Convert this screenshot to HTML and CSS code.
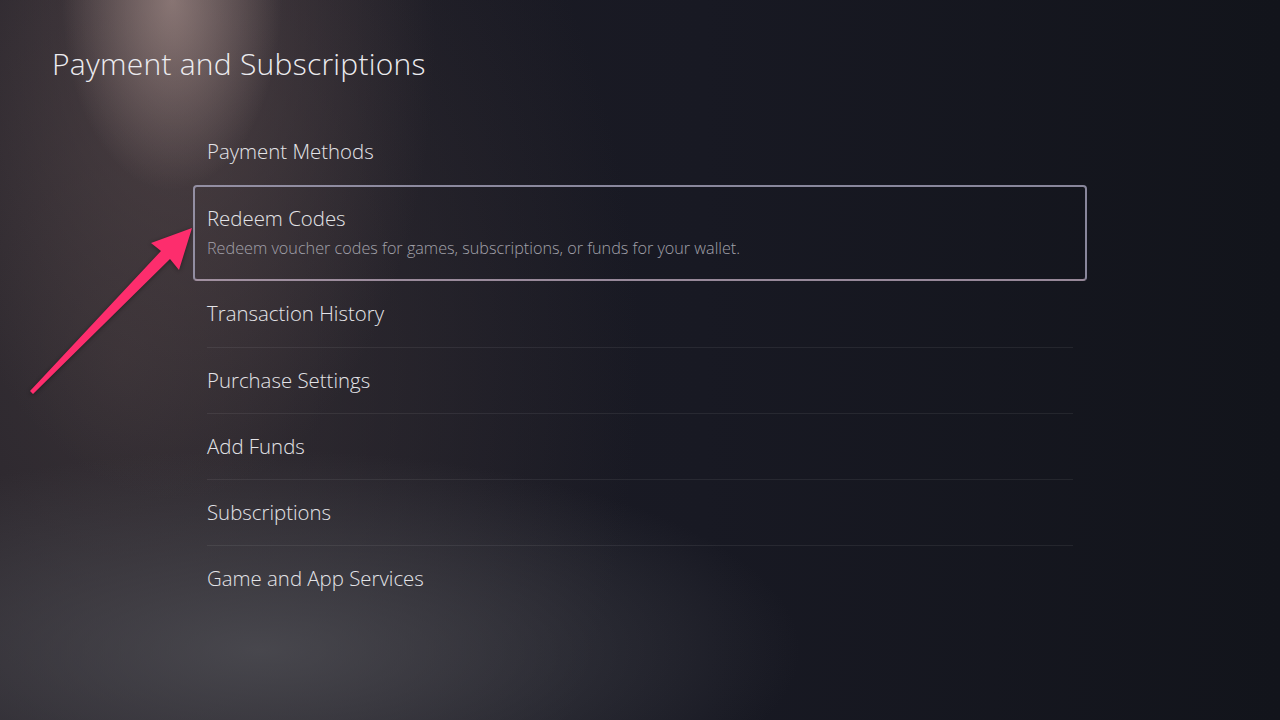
FILE: index.html
```html
<!DOCTYPE html>
<html lang="en">
<head>
    <meta charset="UTF-8">
    <title>Payment and Subscriptions</title>
    <link rel="stylesheet" href="styles.css">
</head>
<body>
    <div class="page">
        <h1 class="page-title">Payment and Subscriptions</h1>
        <ul class="menu">
            <li class="item">Payment Methods</li>
            <li class="item focused">
                <span class="item-label">Redeem Codes</span>
                <span class="item-desc">Redeem voucher codes for games, subscriptions, or funds for your wallet.</span>
            </li>
            <li class="item">Transaction History</li>
            <li class="item divided">Purchase Settings</li>
            <li class="item divided">Add Funds</li>
            <li class="item divided">Subscriptions</li>
            <li class="item divided">Game and App Services</li>
        </ul>
    </div>
    <svg class="arrow" width="1280" height="720" viewBox="0 0 1280 720">
        <polygon points="30,391 161,251 151,243 192,228 179,270 170,259 33,394" fill="#fd2d6d"/>
    </svg>
</body>
</html>
```

FILE: styles.css
```css
* {
    margin: 0;
    padding: 0;
    box-sizing: border-box;
}
html, body {
    width: 1280px;
    height: 720px;
    overflow: hidden;
}
body {
    position: relative;
    font-family: "Open Sans", "Noto Sans", sans-serif;
    color: #e4e4e8;
    background-color: #161720;
    background-image:
        radial-gradient(ellipse 110px 190px at 172px 0, rgba(180, 155, 150, 0.6), rgba(180, 155, 150, 0) 100%),
        radial-gradient(ellipse 260px 460px at 175px 40px, rgba(105, 86, 86, 0.5), rgba(105, 86, 86, 0) 100%),
        radial-gradient(ellipse 540px 200px at 260px 650px, rgba(82, 82, 88, 0.75), rgba(82, 82, 88, 0) 100%),
        radial-gradient(ellipse 520px 720px at 120px 360px, rgba(60, 52, 56, 0.8), rgba(60, 52, 56, 0) 100%),
        linear-gradient(90deg, #1d1c25 0%, #181923 55%, #12141b 100%);
}
.page {
    padding: 45px 0 0 52px;
}
.page-title {
    font-size: 30px;
    font-weight: 300;
    line-height: 38px;
    color: #ececf0;
    letter-spacing: 0.25px;
}
.menu {
    list-style: none;
    width: 894px;
    margin: 36px 0 0 141px;
}
.item {
    height: 66px;
    margin: 0 14px;
    padding-bottom: 2px;
    display: flex;
    flex-direction: column;
    justify-content: center;
    font-size: 20.4px;
    line-height: 26px;
    font-weight: 300;
}
.item.divided {
    border-top: 1px solid rgba(255, 255, 255, 0.07);
}
.item.focused {
    height: 96px;
    margin: 0;
    padding: 18px 12px 0;
    justify-content: flex-start;
    border: 2px solid rgba(175, 172, 198, 0.75);
    border-bottom-color: rgba(195, 175, 195, 0.75);
    border-radius: 4px;
}
.item-desc {
    margin-top: 7px;
    font-size: 16.2px;
    line-height: 20px;
    color: #a2a1aa;
}
.arrow {
    position: absolute;
    left: 0;
    top: 0;
    pointer-events: none;
    filter: drop-shadow(0 1px 2px rgba(0, 0, 0, 0.4));
}
```
